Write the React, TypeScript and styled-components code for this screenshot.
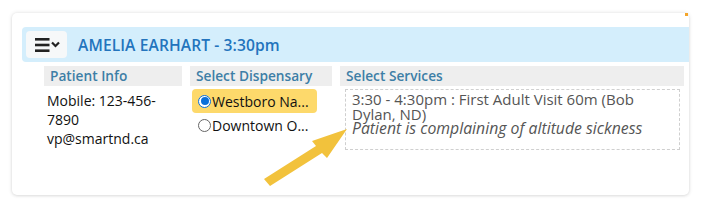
import styled, { createGlobalStyle } from "styled-components";

const GlobalStyle = createGlobalStyle`
  html, body {
    margin: 0;
    padding: 0;
    background: #ffffff;
    font-family: "Open Sans", "Liberation Sans", sans-serif;
  }
`;

const Page = styled.div`
  position: relative;
  width: 701px;
  height: 207px;
  padding: 13px 12px 0 12px;
  box-sizing: border-box;
`;

const Card = styled.div`
  width: 677px;
  height: 182px;
  background: #ffffff;
  border-radius: 5px;
  box-shadow: 0 0 4px rgba(0, 0, 0, 0.12), 0 1px 3px rgba(0, 0, 0, 0.08);
  padding: 14px 0 0 10px;
  box-sizing: border-box;
  position: relative;
`;

const Corner = styled.span`
  position: absolute;
  top: 0;
  right: 1px;
  width: 3px;
  height: 3px;
  background: #f4a52a;
`;

const Header = styled.div`
  display: flex;
  align-items: center;
  height: 35px;
  background: #d4eefc;
  border-radius: 4px 0 0 4px;
  padding-left: 4px;
  gap: 11px;
`;

const MenuButton = styled.button`
  display: flex;
  align-items: center;
  justify-content: center;
  width: 41px;
  height: 27px;
  border: none;
  border-radius: 4px;
  background: #f6f8f9;
  padding: 0;
`;

const Title = styled.div`
  color: #2374bd;
  font-size: 15.6px;
  font-weight: 600;
  letter-spacing: 0.1px;
`;

const Columns = styled.div`
  display: grid;
  grid-template-columns: 138px 142px 344px;
  column-gap: 8px;
  margin: 4px 0 0 22px;
`;

const Column = styled.div`
  display: flex;
  flex-direction: column;
`;

const ColHead = styled.div`
  height: 20px;
  line-height: 20px;
  background: #eeeeee;
  color: #3d7ea6;
  font-size: 13.7px;
  font-weight: 600;
  padding-left: 6px;
`;

const Info = styled.div`
  padding: 5px 0 0 3px;
  font-size: 14px;
  line-height: 19px;
  color: #111;
  width: 118px;
`;

const Options = styled.div`
  display: flex;
  flex-direction: column;
  padding: 3px 0 0 2px;
`;

const Option = styled.label<{ selected?: boolean }>`
  display: flex;
  align-items: center;
  width: 125px;
  height: 24px;
  box-sizing: border-box;
  padding-left: 6px;
  border-radius: 4px;
  background: ${(p) => (p.selected ? "#fdd96b" : "transparent")};
  font-size: 14px;
  color: #111;
  white-space: nowrap;
`;

const Radio = styled.span<{ checked?: boolean }>`
  width: 13px;
  height: 13px;
  border-radius: 50%;
  box-sizing: border-box;
  border: 1px solid ${(p) => (p.checked ? "#0a6fd9" : "#666")};
  background: #fff;
  display: flex;
  align-items: center;
  justify-content: center;
  margin-right: 1px;
  flex-shrink: 0;
  &::after {
    content: "";
    width: 8px;
    height: 8px;
    border-radius: 50%;
    background: ${(p) => (p.checked ? "#0a6fd9" : "transparent")};
  }
`;

const ServiceBox = styled.div`
  margin: 3px 4px 0 5px;
  height: 61px;
  box-sizing: border-box;
  border: 1px dashed #cfcfcf;
  padding: 2px 6px;
  color: #555;
  font-size: 15px;
  line-height: 14.5px;
`;

const Note = styled.div`
  font-style: italic;
  font-size: 15.8px;
`;

const Arrow = styled.svg`
  position: absolute;
  left: 258px;
  top: 118px;
`;

function MenuIcon() {
  return (
    <svg width="30" height="16" viewBox="0 0 30 16">
      <rect x="3" y="1" width="14.5" height="2.6" fill="#222" />
      <rect x="3" y="6.7" width="14.5" height="2.6" fill="#222" />
      <rect x="3" y="12.4" width="14.5" height="2.6" fill="#222" />
      <path d="M20 5.5 L23.5 9 L27 5.5" stroke="#222" strokeWidth="2.2" fill="none" />
    </svg>
  );
}

export default function App() {
  return (
    <>
      <GlobalStyle />
      <Page>
        <Card>
          <Corner />
          <Header>
            <MenuButton>
              <MenuIcon />
            </MenuButton>
            <Title>AMELIA EARHART - 3:30pm</Title>
          </Header>
          <Columns>
            <Column>
              <ColHead>Patient Info</ColHead>
              <Info>
                Mobile: 123-456-7890
                <br />
                vp@smartnd.ca
              </Info>
            </Column>
            <Column>
              <ColHead>Select Dispensary</ColHead>
              <Options>
                <Option selected>
                  <Radio checked />
                  Westboro Na...
                </Option>
                <Option>
                  <Radio />
                  Downtown O...
                </Option>
              </Options>
            </Column>
            <Column>
              <ColHead>Select Services</ColHead>
              <ServiceBox>
                3:30 - 4:30pm : First Adult Visit 60m (Bob Dylan, ND)
                <Note>Patient is complaining of altitude sickness</Note>
              </ServiceBox>
            </Column>
          </Columns>
        </Card>
        <Arrow width="95" height="70" viewBox="0 0 95 70">
          <path
            d="M6 61 L58 28 L54 23 L89 11 L69 40 L64 35 L12 68 Z"
            fill="#f2c23c"
          />
        </Arrow>
      </Page>
    </>
  );
}
